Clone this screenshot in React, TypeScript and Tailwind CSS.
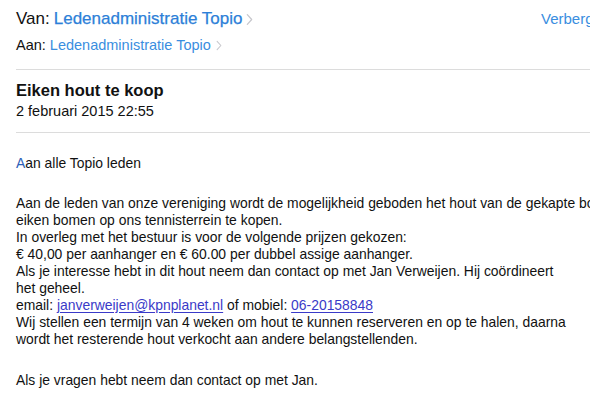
import React from "react";

function Chevron({ className }: { className?: string }) {
  return (
    <svg
      viewBox="0 0 8 14"
      className={className}
      fill="none"
      stroke="currentColor"
      strokeWidth="1.4"
      strokeLinecap="round"
      strokeLinejoin="round"
    >
      <path d="M1.5 1.5 6.5 7l-5 5.5" />
    </svg>
  );
}

const lines1 = [
  "Aan de leden van onze vereniging wordt de mogelijkheid geboden het hout van de gekapte bomen",
  "eiken bomen op ons tennisterrein te kopen.",
  "In overleg met het bestuur is voor de volgende prijzen gekozen:",
  "€ 40,00 per aanhanger en € 60.00 per dubbel assige aanhanger.",
  "Als je interesse hebt in dit hout neem dan contact op met Jan Verweijen. Hij coördineert",
  "het geheel.",
];

const lines2 = [
  "Wij stellen een termijn van 4 weken om hout te kunnen reserveren en op te halen, daarna",
  "wordt het resterende hout verkocht aan andere belangstellenden.",
];

export default function App() {
  return (
    <div className="h-[405px] w-[590px] overflow-hidden bg-white font-['Liberation_Sans',Arial,sans-serif] text-[#111]">
      <header className="pl-4 pt-2">
        <div className="flex h-[22px] items-center whitespace-nowrap text-[17px] leading-[22px]">
          <span>Van:</span>
          <span className="ml-[4px] text-[#2d7fd8] [-webkit-text-stroke:0.25px_#2d7fd8]">
            Ledenadministratie Topio
          </span>
          <Chevron className="ml-[4px] h-[13px] w-[7px] text-[#c7c7cc]" />
          <span className="ml-auto w-[49px] overflow-hidden text-[15px] text-[#3a8ee0]">
            Verbergen
          </span>
        </div>
        <div className="mt-[6px] flex h-[18px] items-center whitespace-nowrap text-[14.5px] leading-[18px]">
          <span>Aan:</span>
          <span className="ml-[4px] text-[#3a8ee0]">Ledenadministratie Topio</span>
          <Chevron className="ml-[5px] h-[11px] w-[6px] text-[#c7c7cc]" />
        </div>
      </header>

      <div className="ml-4 mt-[15px] h-px bg-[#dcdcdc]" />

      <section className="pl-4 pt-[9px]">
        <h1 className="text-[16.5px] font-bold leading-[22px]">Eiken hout te koop</h1>
        <p className="mt-px text-[14.5px] leading-[18px]">2 februari 2015 22:55</p>
      </section>

      <div className="ml-4 mt-[12px] h-px bg-[#dcdcdc]" />

      <article className="whitespace-nowrap pl-4 pt-[22px] text-[13.9px] leading-[17px]">
        <p>
          <span className="text-[#2d5fb8]">A</span>an alle Topio leden
        </p>

        <div className="mt-[23px]">
          {lines1.map((l) => (
            <p key={l}>{l}</p>
          ))}
          <p>
            email:{" "}
            <a className="text-[#3a3ac8] underline underline-offset-2">
              janverweijen@kpnplanet.nl
            </a>{" "}
            of mobiel:{" "}
            <a className="text-[#3a3ac8] underline underline-offset-2">06-20158848</a>
          </p>
          {lines2.map((l) => (
            <p key={l}>{l}</p>
          ))}
        </div>

        <p className="mt-[24px]">Als je vragen hebt neem dan contact op met Jan.</p>
      </article>
    </div>
  );
}
